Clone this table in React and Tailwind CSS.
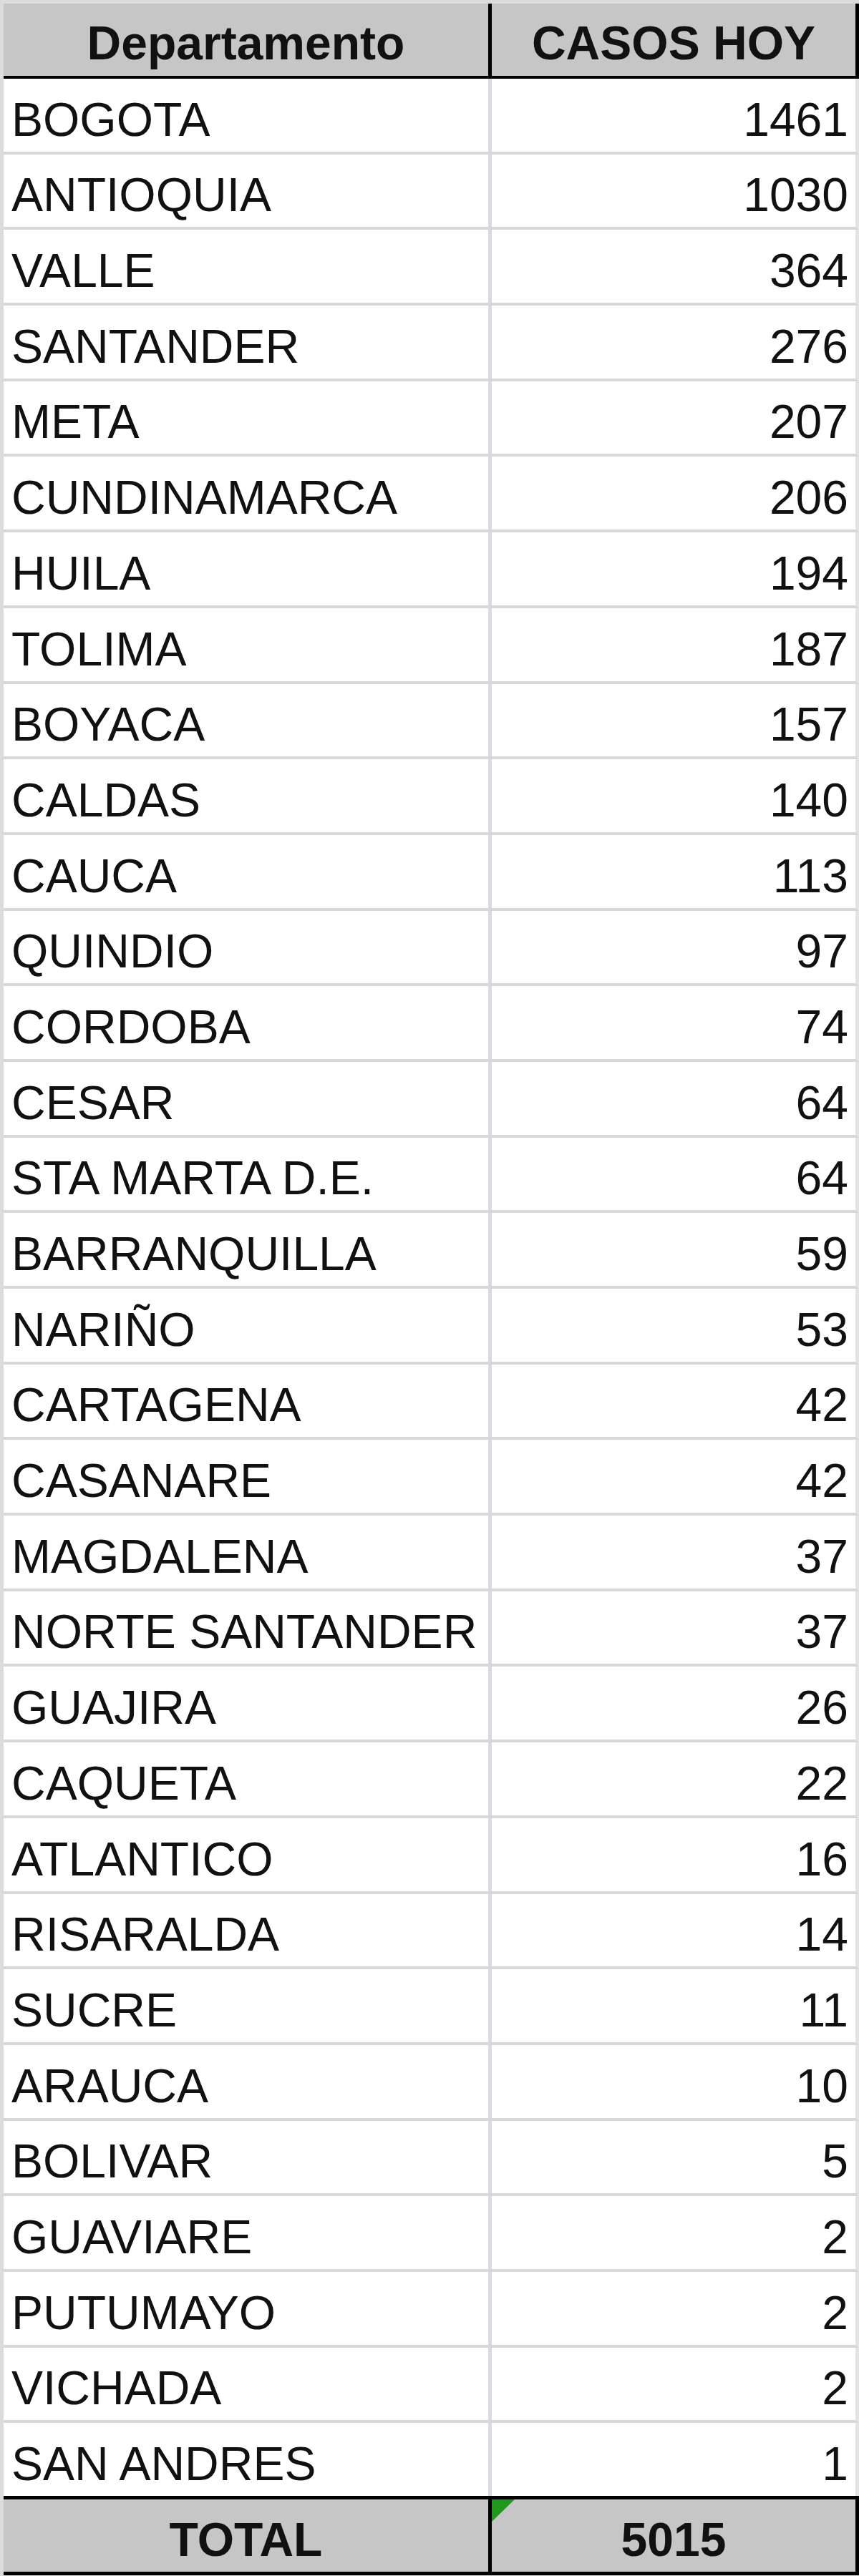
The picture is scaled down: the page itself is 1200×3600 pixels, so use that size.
const ROWS = [
  ["BOGOTA", 1461],
  ["ANTIOQUIA", 1030],
  ["VALLE", 364],
  ["SANTANDER", 276],
  ["META", 207],
  ["CUNDINAMARCA", 206],
  ["HUILA", 194],
  ["TOLIMA", 187],
  ["BOYACA", 157],
  ["CALDAS", 140],
  ["CAUCA", 113],
  ["QUINDIO", 97],
  ["CORDOBA", 74],
  ["CESAR", 64],
  ["STA MARTA D.E.", 64],
  ["BARRANQUILLA", 59],
  ["NARIÑO", 53],
  ["CARTAGENA", 42],
  ["CASANARE", 42],
  ["MAGDALENA", 37],
  ["NORTE SANTANDER", 37],
  ["GUAJIRA", 26],
  ["CAQUETA", 22],
  ["ATLANTICO", 16],
  ["RISARALDA", 14],
  ["SUCRE", 11],
  ["ARAUCA", 10],
  ["BOLIVAR", 5],
  ["GUAVIARE", 2],
  ["PUTUMAYO", 2],
  ["VICHADA", 2],
  ["SAN ANDRES", 1],
];

export default function App() {
  return (
    <div className="w-[1200px] h-[3600px] bg-[#dcdcdc] pt-[5px] pl-[5px] font-['Liberation_Sans',Arial,sans-serif] text-[66px] leading-none text-[#111]">
      {/* header */}
      <div className="flex h-[105px] bg-[#c6c6c6] border-b-4 border-r-[5px] border-black font-bold">
        <div className="w-[677px] flex items-end justify-center pb-[13px]">Departamento</div>
        <div className="flex-1 flex items-end justify-center pb-[13px] border-l-[5px] border-black">
          CASOS HOY
        </div>
      </div>

      {/* body */}
      {ROWS.map(([name, value], i) => {
        const last = i === ROWS.length - 1;
        return (
          <div
            key={name}
            className={
              last
                ? "flex h-[101.7px] bg-white border-r-[5px] border-[#e4e4e8]"
                : "flex h-[105.7px] bg-white border-b-4 border-b-[#d8d8d8] border-r-[5px] border-r-[#e4e4e8]"
            }
          >
            <div className="w-[677px] flex items-end pl-[11px] pb-[12px]">{name}</div>
            <div className="flex-1 flex items-end justify-end pr-[10px] pb-[12px] border-l-[5px] border-[#dadae0]">
              {value}
            </div>
          </div>
        );
      })}

      {/* total */}
      <div className="flex h-[111px] bg-[#c6c6c6] border-y-[5px] border-r-[5px] border-black font-bold">
        <div className="w-[677px] flex items-end justify-center pb-[12px]">TOTAL</div>
        <div className="relative flex-1 flex items-end justify-center pb-[12px] border-l-[5px] border-black">
          <svg className="absolute top-0 left-0" width="32" height="31" viewBox="0 0 32 31">
            <polygon points="0,0 32,0 0,31" fill="#1f9a1f" />
          </svg>
          5015
        </div>
      </div>
    </div>
  );
}
